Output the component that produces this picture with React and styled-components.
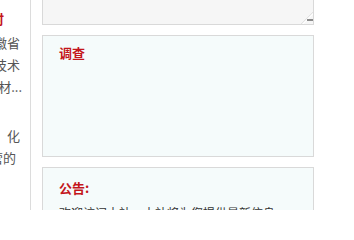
import React from "react";
import styled, { createGlobalStyle } from "styled-components";

const Global = createGlobalStyle`
    html, body {
        margin: 0;
        padding: 0;
        background: #fff;
    }
    body {
        font-family: "Noto Sans CJK SC", "Liberation Sans", sans-serif;
    }
`

const Page = styled.div`
    display: flex;
    width: 354px;
    height: 210px;
    overflow: hidden;
`

const Side = styled.div`
    flex: 0 0 30px;
    border-right: 1px solid #dcdcdc;
    overflow: hidden;
    padding-top: 8px;
    font-size: 13px;
`

const SideLine = styled.div`
    display: flex;
    justify-content: flex-end;
    white-space: nowrap;
    line-height: ${props => props.$lh || 22}px;
    padding-right: ${props => props.$pad || 0}px;
    margin-top: ${props => props.$mt || 0}px;
    color: ${props => props.$title ? "#c4161c" : "#555"};
    font-weight: ${props => props.$title ? "bold" : "normal"};
    span {
        flex-shrink: 0;
    }
`

const Main = styled.div`
    display: flex;
    flex-direction: column;
    gap: 10px;
    width: 272px;
    margin-left: 11px;
`

const Panel = styled.div`
    position: relative;
    box-sizing: border-box;
    border: 1px solid #d9d9d9;
    background: ${props => props.$grey ? "#f6f6f6" : "#f5fbfb"};
    height: ${props => props.$h}px;
    padding: 6px 16px;
    flex-shrink: 0;
`

const TopPanel = styled(Panel)`
    border-top: none;
`

const Title = styled.div`
    color: #c4161c;
    font-weight: bold;
    font-size: 13px;
    line-height: 22px;
    margin-top: ${props => props.$mt || 0}px;
`

const Notice = styled.div`
    margin-top: 4px;
    font-size: 12px;
    line-height: 20px;
    color: #333;
    white-space: nowrap;
`

const Grip = styled.svg`
    position: absolute;
    right: 0;
    bottom: 0;
`

const ResizeGrip = () => (
    <Grip width="14" height="14" viewBox="0 0 14 14">
        <line x1="2" y1="14" x2="14" y2="2" stroke="#e2e2e2" strokeWidth="1" />
        <line x1="4" y1="14" x2="14" y2="4" stroke="#ffffff" strokeWidth="1" />
        <rect x="8" y="9" width="6" height="2" fill="#8a8a8a" />
    </Grip>
)

const App = () => {
    return (
        <Page>
            <Global />
            <Side>
                <SideLine $title $pad={26} $lh={21}><span>新闻时</span></SideLine>
                <SideLine $pad={10} $mt={3}><span>位于安徽省</span></SideLine>
                <SideLine $pad={10}><span>开发技术</span></SideLine>
                <SideLine $pad={8}><span>新材...</span></SideLine>
                <SideLine $pad={10} $mt={27}><span>信息　化</span></SideLine>
                <SideLine $pad={14}><span>服务营的</span></SideLine>
            </Side>
            <Main>
                <TopPanel $grey $h={25}>
                    <ResizeGrip />
                </TopPanel>
                <Panel $h={122}>
                    <Title>调查</Title>
                </Panel>
                <Panel $h={60}>
                    <Title $mt={3}>公告:</Title>
                    <Notice>欢迎访问本站，本站将为您提供最新信息</Notice>
                </Panel>
            </Main>
        </Page>
    );
};

export default App;
